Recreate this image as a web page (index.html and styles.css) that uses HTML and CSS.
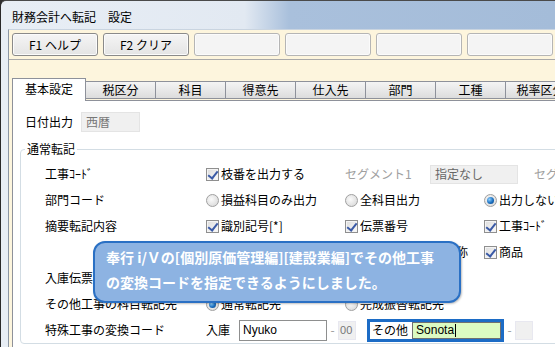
FILE: index.html
```html
<!DOCTYPE html>
<html>

<head>
    <meta charset="utf-8">
    <title>財務会計へ転記 設定</title>
    <link rel="stylesheet" href="styles.css">
</head>

<body>
    <div class="window">
        <div class="title">財務会計へ転記　設定</div>

        <div class="client">
            <div class="toolbar">
                <div class="fbtn">F1 ヘルプ</div>
                <div class="fbtn">F2 クリア</div>
                <div class="fbtn off"></div>
                <div class="fbtn off"></div>
                <div class="fbtn off"></div>
                <div class="fbtn off"></div>
            </div>

            <div class="tabarea">
                <div class="tabs">
                    <div class="tab active">基本設定</div>
                    <div class="tab">税区分</div>
                    <div class="tab">科目</div>
                    <div class="tab">得意先</div>
                    <div class="tab">仕入先</div>
                    <div class="tab">部門</div>
                    <div class="tab">工種</div>
                    <div class="tab">税率区分</div>
                </div>

                <div class="panel">
                    <div class="daterow">
                        <span class="lbl">日付出力</span>
                        <span class="ro date">西暦</span>
                    </div>

                    <fieldset class="group">
                        <legend>通常転記</legend>
                        <div class="rows">
                            <div class="row">
                                <span>工事ｺｰﾄﾞ</span>
                                <span class="opt"><i class="cb"></i>枝番を出力する</span>
                                <span class="seg">
                                    <span class="gray seglbl">セグメント1</span>
                                    <span class="ro sel">指定なし</span>
                                    <span class="gray seg2">セグメント2</span>
                                </span>
                            </div>
                            <div class="row">
                                <span>部門コード</span>
                                <span class="opt"><i class="rb"></i>損益科目のみ出力</span>
                                <span class="opt"><i class="rb"></i>全科目出力</span>
                                <span class="opt"><i class="rb on"></i>出力しない</span>
                            </div>
                            <div class="row">
                                <span>摘要転記内容</span>
                                <span class="opt"><i class="cb"></i>識別記号[*]</span>
                                <span class="opt"><i class="cb"></i>伝票番号</span>
                                <span class="opt"><i class="cb"></i>工事ｺｰﾄﾞ</span>
                            </div>
                            <div class="row">
                                <span></span>
                                <span class="opt"><i class="cb"></i>工種ｺｰﾄﾞ</span>
                                <span class="opt"><i class="cb"></i>得意先・仕入先名称</span>
                                <span class="opt"><i class="cb"></i>商品</span>
                            </div>
                            <div class="row">
                                <span>入庫伝票の転記先</span>
                                <span class="opt"><i class="rb on"></i>通常転記先</span>
                                <span class="opt"><i class="rb"></i>完成振替転記先</span>
                            </div>
                            <div class="row">
                                <span>その他工事の科目転記先</span>
                                <span class="opt"><i class="rb on"></i>通常転記先</span>
                                <span class="opt"><i class="rb"></i>完成振替転記先</span>
                            </div>
                            <div class="row">
                                <span>特殊工事の変換コード</span>
                                <span class="codes">
                                    <span class="kind">入庫</span>
                                    <span class="code">Nyuko</span>
                                    <span class="dash">-</span>
                                    <span class="ro sub">00</span>
                                    <span class="focus">
                                        <span class="kind">その他</span>
                                        <span class="code green">Sonota<b class="caret"></b></span>
                                    </span>
                                    <span class="dash">-</span>
                                    <span class="ro sub"></span>
                                </span>
                            </div>
                        </div>
                    </fieldset>
                </div>
            </div>
        </div>

        <div class="callout">
            奉行 i/Ｖの[個別原価管理編][建設業編]でその他工事<br>
            の変換コードを指定できるようにしました。
        </div>
    </div>
</body>

</html>
```

FILE: styles.css
```css
* {
    margin: 0px;
    padding: 0px;
    box-sizing: border-box;
}

body {
    background: #303030;
    font-family: "Noto Sans CJK JP", "Liberation Sans", sans-serif;
    font-size: 12px;
    line-height: 16px;
    color: #000;
    overflow: hidden;
}

.window {
    position: relative;
    height: 347px;
    overflow: hidden;
    border-top: 1px solid #4a4a4a;
    border-left: 1px solid #2a2a2a;
    border-top-left-radius: 6px;
    background: linear-gradient(to right, #e8eef5 0%, #e2e9f2 44%, #a9c0dc 52%, #a4bcd9 100%);
}

.title {
    height: 28px;
    padding: 3px 0 0 11px;
    display: flex;
    align-items: center;
}

.client {
    margin-left: 7px;
    height: 320px;
    background: #fdf5dd;
    border-left: 1px solid #8c97a5;
    border-top: 1px solid #c9d4e0;
}

/* toolbar */

.toolbar {
    display: flex;
    gap: 5px;
    padding: 3px 0 3px 3px;
    border-bottom: 1px solid #a9a9a9;
}

.fbtn {
    flex: none;
    width: 86px;
    height: 23px;
    border: 1px solid #8a8a8a;
    border-radius: 3px;
    background: linear-gradient(#f5f5f5, #e4e4e4);
    box-shadow: inset 0 0 0 1px #fbfbfb;
    display: flex;
    justify-content: center;
    align-items: center;
}

.fbtn.off {
    border-color: #b5b5b5;
    background: #f4f4f4;
}

/* tabs */

.tabarea {
    padding: 18px 0 0 3px;
}

.tabs {
    display: flex;
    align-items: flex-end;
    height: 22px;
}

.tab {
    flex: none;
    width: 70px;
    height: 18px;
    margin-bottom: 1px;
    border: 1px solid #8e919a;
    border-left: none;
    background: linear-gradient(#f4f4f4, #dcdcdc);
    text-align: center;
    line-height: 16px;
}

.tab.active {
    width: 74px;
    height: 23px;
    margin-bottom: -1px;
    border-left: 1px solid #8e919a;
    border-bottom: none;
    background: #fff;
    position: relative;
    z-index: 1;
    line-height: 20px;
}

.panel {
    height: 260px;
    width: 600px;
    background: #fff;
    border: 1px solid #8e919a;
    padding: 11px 0 0 12px;
}

.daterow {
    display: flex;
    align-items: center;
    height: 20px;
}

.lbl {
    width: 56px;
}

.ro {
    display: inline-flex;
    align-items: center;
    background: #f0f0f0;
    border: 1px solid #e4e4e4;
    color: #777;
    padding-left: 4px;
}

.date {
    width: 59px;
    height: 20px;
}

/* group */

.group {
    margin: 9px 0 0 -5px;
    padding: 0 0 0 4px;
    width: 700px;
    border: 1px solid #d3dde4;
    border-radius: 4px;
}

.group legend {
    padding: 0 2px;
    line-height: 16px;
}

.rows {
    margin-left: 20px;
    padding-top: 4px;
}

.row {
    display: grid;
    grid-template-columns: 161px 139px 139px 200px;
    align-items: center;
    height: 26px;
    white-space: nowrap;
}

.opt {
    display: flex;
    align-items: center;
    gap: 2px;
}

.gray {
    color: #a0a0a0;
}

.seg {
    grid-column: 3 / 5;
    display: flex;
    align-items: center;
}

.seglbl {
    width: 85px;
}

.sel {
    width: 88px;
    height: 19px;
    color: #666;
}

.seg2 {
    margin-left: 16px;
}

/* check / radio */

.cb {
    position: relative;
    flex: none;
    width: 13px;
    height: 13px;
    border: 1px solid #8f8f8f;
    background: linear-gradient(135deg, #dcdcdc, #fbfbfb);
    box-shadow: inset 0 0 0 1px #f4f4f4;
}

.cb::after {
    content: "";
    position: absolute;
    left: 3px;
    top: 0px;
    width: 4px;
    height: 8px;
    border-right: 2px solid #3a5aa6;
    border-bottom: 2px solid #3a5aa6;
    transform: rotate(38deg);
}

.rb {
    position: relative;
    flex: none;
    width: 13px;
    height: 13px;
    border: 1px solid #a0a0a0;
    border-radius: 50%;
    background: radial-gradient(circle at 40% 40%, #fafafa, #d4d4d4);
}

.rb.on::after {
    content: "";
    position: absolute;
    left: 2px;
    top: 2px;
    width: 7px;
    height: 7px;
    border-radius: 50%;
    background: radial-gradient(circle at 35% 35%, #8fd0ff, #1a6fc0 55%, #0b3f7a);
}

/* conversion codes */

.codes {
    grid-column: 2 / 5;
    display: flex;
    align-items: center;
}

.kind {
    margin-right: 9px;
}

.code {
    display: inline-flex;
    align-items: center;
    width: 88px;
    height: 21px;
    border: 1px solid #8e8f8f;
    padding-left: 3px;
    font-family: "Liberation Sans", sans-serif;
}

.dash {
    color: #999;
    width: 11px;
    text-align: center;
}

.sub {
    width: 18px;
    height: 19px;
    border-color: #e8e8f0;
    padding-left: 1px;
    font-family: "Liberation Sans", sans-serif;
    font-size: 11px;
}

.focus {
    display: flex;
    align-items: center;
    margin-left: 11px;
    height: 23px;
    border: 3px solid #1c6cc6;
    padding-left: 2px;
    background: #fff;
}

.focus .kind {
    margin-right: 4px;
}

.green {
    height: 17px;
    width: 89px;
    border-color: #707070;
    background: #dcfbc2;
}

.caret {
    display: inline-block;
    width: 1px;
    height: 13px;
    background: #000;
    margin-left: 1px;
}

/* balloon */

.callout {
    position: absolute;
    left: 92px;
    top: 240px;
    width: 368px;
    height: 62px;
    padding: 2px 0 0 11px;
    border: 2px solid #2a70c4;
    border-radius: 12px;
    background: #8db3e2;
    box-shadow: 1px 1px 2px rgba(0, 0, 0, 0.25);
    color: #fff;
    font-size: 14px;
    font-weight: bold;
    line-height: 25px;
    white-space: nowrap;
}
```
